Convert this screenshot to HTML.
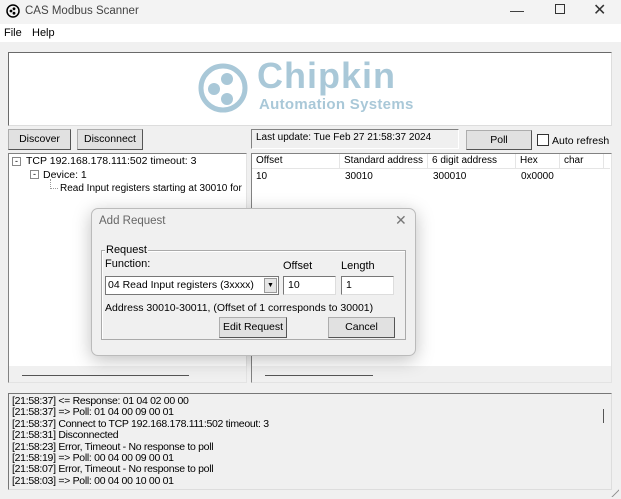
<!DOCTYPE html>
<html><head><style>
*{box-sizing:border-box;margin:0;padding:0}
body{width:621px;height:499px;overflow:hidden;background:#f0f0f0;font-family:"Liberation Sans",sans-serif;font-size:11px;color:#000;position:relative}
.a{position:absolute}
.btn{position:absolute;background:#e1e1e1;border:1px solid #adadad;border-right-color:#555;border-bottom-color:#555;text-align:center;line-height:18px;font-size:10.5px}
.sunk{position:absolute;background:#fff;border:1px solid #828282;border-right-color:#e3e3e3;border-bottom-color:#e3e3e3}
.log div{height:11.4px;line-height:11.4px;font-size:10.5px;letter-spacing:-0.3px}
.th{position:absolute;top:0;padding-left:4px;border-right:1px solid #e5e5e5;height:15px;line-height:14px;white-space:nowrap;overflow:hidden}
</style></head><body>
<div class="a" style="left:0;top:0;width:621px;height:24px;background:#f3f3f3"></div>
<svg class="a" style="left:6px;top:4px" width="14" height="14" viewBox="0 0 14 14"><circle cx="7" cy="7" r="6" fill="none" stroke="#000" stroke-width="1.5"/><circle cx="5" cy="7" r="1.4"/><circle cx="8" cy="4.8" r="1.4"/><circle cx="8" cy="9.2" r="1.4"/></svg>
<div class="a" style="left:25px;top:5px;font-size:11.5px;color:#444">CAS Modbus Scanner</div>
<div class="a" style="left:510px;top:2px;font-size:14px;color:#333">&#8212;</div>
<div class="a" style="left:555px;top:4px;width:10px;height:10px;border:1px solid #333"></div>
<div class="a" style="left:593px;top:0px;font-size:16px;color:#333">&#10005;</div>
<div class="a" style="left:0;top:24px;width:621px;height:18px;background:#fff"></div>
<div class="a" style="left:4px;top:27px;font-size:11px">File</div>
<div class="a" style="left:32px;top:27px;font-size:11px">Help</div>
<div class="a" style="left:8px;top:52px;width:604px;height:74px;background:#fff;border:1px solid #6a6a6a;border-right-color:#ddd;border-bottom-color:#ddd"></div>
<svg class="a" style="left:197px;top:62px" width="54" height="54" viewBox="0 0 54 54"><circle cx="26" cy="26" r="22" fill="none" stroke="#a9c8d8" stroke-width="5"/><circle cx="17" cy="27" r="6" fill="#a9c8d8"/><circle cx="30" cy="17" r="6" fill="#a9c8d8"/><circle cx="30" cy="37" r="6" fill="#a9c8d8"/></svg>
<div class="a" style="left:257px;top:55px;font-size:36px;font-weight:bold;color:#a9c8d8;letter-spacing:1px">Chipkin</div>
<div class="a" style="left:259px;top:96px;font-size:15px;font-weight:bold;color:#a9c8d8;letter-spacing:0.3px">Automation Systems</div>
<div class="btn" style="left:8px;top:129px;width:63px;height:21px">Discover</div>
<div class="btn" style="left:77px;top:129px;width:66px;height:21px">Disconnect</div>
<div class="a" style="left:251px;top:129px;width:208px;height:20px;border:1px solid #828282;border-right-color:#fff;border-bottom-color:#fff;padding:2px 4px;font-size:10px">Last update: Tue Feb 27 21:58:37 2024</div>
<div class="btn" style="left:466px;top:130px;width:66px;height:20px">Poll</div>
<div class="a" style="left:537px;top:134px;width:12px;height:12px;background:#fff;border:1px solid #333"></div>
<div class="a" style="left:552px;top:135px;font-size:10.5px">Auto refresh</div>
<div class="sunk" style="left:8px;top:153px;width:239px;height:230px"></div>
<div class="a" style="left:12px;top:157px;width:9px;height:9px;border:1px solid #888;font-size:9px;line-height:6px;text-align:center">-</div>
<div class="a" style="left:26px;top:155px;font-size:10.5px">TCP 192.168.178.111:502 timeout: 3</div>
<div class="a" style="left:30px;top:170px;width:9px;height:9px;border:1px solid #888;font-size:9px;line-height:6px;text-align:center">-</div>
<div class="a" style="left:43px;top:169px;font-size:10.5px">Device: 1</div>
<div class="a" style="left:50px;top:179px;width:8px;height:10px;border-left:1px dotted #999;border-bottom:1px dotted #999"></div>
<div class="a" style="left:60px;top:183px;font-size:10px;white-space:nowrap;width:184px;overflow:hidden">Read Input registers starting at 30010 for 1</div>
<div class="sunk" style="left:251px;top:153px;width:361px;height:230px"></div>
<div class="a" style="left:252px;top:154px;width:358px;height:15px;background:#fff;border-bottom:1px solid #e5e5e5;font-size:10px">
<div class="th" style="left:0;width:88px">Offset</div>
<div class="th" style="left:88px;width:88px">Standard address</div>
<div class="th" style="left:176px;width:88px">6 digit address</div>
<div class="th" style="left:264px;width:44px">Hex</div>
<div class="th" style="left:308px;width:44px">char</div>
</div>
<div class="a" style="left:256px;top:171px;font-size:10px">10</div>
<div class="a" style="left:345px;top:171px;font-size:10px">30010</div>
<div class="a" style="left:433px;top:171px;font-size:10px">300010</div>
<div class="a" style="left:521px;top:171px;font-size:10px">0x0000</div>
<div class="a" style="left:252px;top:366px;width:359px;height:16px;background:#f0f0f0"></div>
<div class="a" style="left:9px;top:366px;width:237px;height:16px;background:#f0f0f0"></div>
<div class="a" style="left:22px;top:375px;width:167px;height:1px;background:#555"></div>
<div class="a" style="left:265px;top:375px;width:108px;height:1px;background:#555"></div>
<div class="sunk" style="left:8px;top:393px;width:604px;height:97px;background:#f0f0f0;border-color:#777 #ddd #ddd #777"></div>
<div class="a log" style="left:12px;top:396px">
<div>[21:58:37] &lt;= Response: 01 04 02 00 00</div>
<div>[21:58:37] =&gt; Poll: 01 04 00 09 00 01</div>
<div>[21:58:37] Connect to TCP 192.168.178.111:502 timeout: 3</div>
<div>[21:58:31] Disconnected</div>
<div>[21:58:23] Error, Timeout - No response to poll</div>
<div>[21:58:19] =&gt; Poll: 00 04 00 09 00 01</div>
<div>[21:58:07] Error, Timeout - No response to poll</div>
<div>[21:58:03] =&gt; Poll: 00 04 00 10 00 01</div>
</div>
<div class="a" style="left:603px;top:409px;width:1px;height:14px;background:#555"></div>
<div class="a" style="left:91px;top:208px;width:325px;height:148px;background:#f0f0f0;border:1px solid #bbb;border-radius:7px;box-shadow:0 4px 18px rgba(0,0,0,0.25)"></div>
<div class="a" style="left:99px;top:215px;font-size:11.5px;color:#666">Add Request</div>
<div class="a" style="left:395px;top:212px;font-size:14px;color:#777">&#10005;</div>
<div class="a" style="left:101px;top:250px;width:305px;height:90px;border:1px solid #aaa;box-shadow:inset 1px 1px 0 #fff"></div>
<div class="a" style="left:105px;top:244px;background:#f0f0f0;padding:0 1px;font-size:11px">Request</div>
<div class="a" style="left:105px;top:258px;font-size:11px">Function:</div>
<div class="a" style="left:283px;top:260px;font-size:11px">Offset</div>
<div class="a" style="left:341px;top:260px;font-size:11px">Length</div>
<div class="a" style="left:105px;top:276px;width:174px;height:19px;background:#fff;border:1px solid #777;padding:2px 2px;font-size:10.5px">04 Read Input registers (3xxxx)</div>
<div class="a" style="left:264px;top:278px;width:13px;height:15px;background:#e5e5e5;border:1px solid #999;font-size:7px;text-align:center;line-height:14px">&#9660;</div>
<div class="a" style="left:283px;top:276px;width:53px;height:19px;background:#fff;border:1px solid #777;border-right-color:#ddd;border-bottom-color:#ddd;padding:2px 4px;font-size:10.5px">10</div>
<div class="a" style="left:341px;top:276px;width:53px;height:19px;background:#fff;border:1px solid #777;border-right-color:#ddd;border-bottom-color:#ddd;padding:2px 4px;font-size:10.5px">1</div>
<div class="a" style="left:105px;top:302px;font-size:10.5px">Address 30010-30011, (Offset of 1 corresponds to 30001)</div>
<div class="btn" style="left:219px;top:317px;width:68px;height:21px">Edit Request</div>
<div class="btn" style="left:328px;top:317px;width:67px;height:21px">Cancel</div>
<div class="a" style="left:609px;top:487px;width:10px;height:10px;background:linear-gradient(135deg,transparent 60%,#999 60%,#999 68%,transparent 68%)"></div>
</body></html>
